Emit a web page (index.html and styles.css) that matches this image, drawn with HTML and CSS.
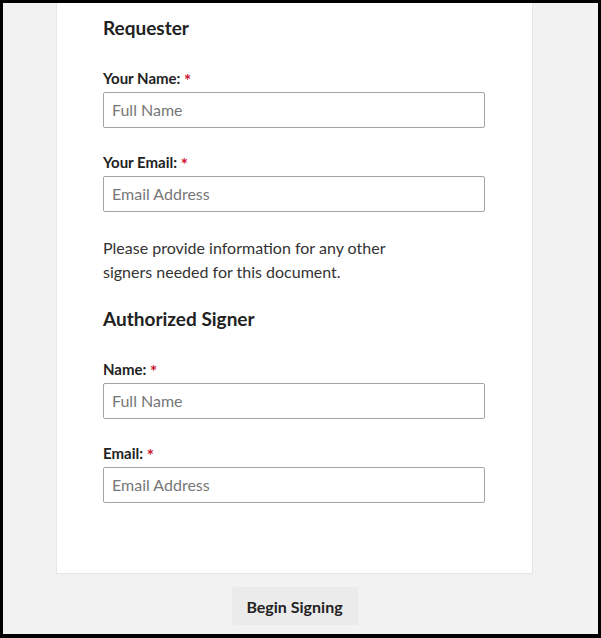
FILE: index.html
```html
<!DOCTYPE html>
<html lang="en">
<head>
<meta charset="utf-8">
<title>Requester</title>
<link rel="stylesheet" href="styles.css">
</head>
<body>
<div class="frame">
  <div class="card">
    <h2 class="heading">Requester</h2>
    <div class="field">
      <label class="label">Your Name: <span class="req">*</span></label>
      <input class="input" type="text" placeholder="Full Name">
    </div>
    <div class="field">
      <label class="label">Your Email: <span class="req">*</span></label>
      <input class="input" type="text" placeholder="Email Address">
    </div>
    <p class="note">Please provide information for any other<br>signers needed for this document.</p>
    <h2 class="heading">Authorized Signer</h2>
    <div class="field">
      <label class="label">Name: <span class="req">*</span></label>
      <input class="input" type="text" placeholder="Full Name">
    </div>
    <div class="field">
      <label class="label">Email: <span class="req">*</span></label>
      <input class="input" type="text" placeholder="Email Address">
    </div>
  </div>
  <div class="actions">
    <button class="btn" type="button">Begin Signing</button>
  </div>
</div>
</body>
</html>
```

FILE: styles.css
```css
* { box-sizing: border-box; }
html, body { margin: 0; padding: 0; }
body {
  font-family: Lato, "Liberation Sans", sans-serif;
  color: #222;
}
.frame {
  width: 601px;
  height: 638px;
  border: 3px solid #000;
  border-bottom-width: 4px;
  background: #f2f2f2;
  overflow: hidden;
}
.card {
  width: 477px;
  margin-left: 53px;
  height: 571px;
  background: #fff;
  border: 1px solid #e6e6e6;
  border-top: none;
  padding: 13px 0 0 46px;
}
.heading {
  margin: 0;
  font-size: 19px;
  line-height: 24px;
  font-weight: 700;
  color: #222;
}
.field {
  display: flex;
  flex-direction: column;
  gap: 4px;
  margin-top: 28px;
}
.field + .field { margin-top: 24px; }
.label {
  font-size: 15px;
  line-height: 20px;
  font-weight: 700;
  color: #222;
}
.req {
  color: #d0112b;
  font-size: 17px;
  line-height: 0;
  vertical-align: -3px;
}
.input {
  width: 382px;
  height: 36px;
  border: 1px solid #a3a3a3;
  border-radius: 2px;
  padding: 0 8px 2px;
  font-family: inherit;
  font-size: 16px;
  color: #222;
  background: #fff;
}
.input::placeholder { color: #777; }
.note {
  margin: 24px 0 23px;
  font-size: 16px;
  line-height: 24px;
  color: #333;
}
.actions {
  display: flex;
  justify-content: center;
  width: 477px;
  margin-left: 53px;
  padding-top: 13px;
}
.btn {
  width: 126px;
  height: 38px;
  border: none;
  border-radius: 2px;
  background: #ebebeb;
  font-family: inherit;
  font-size: 16px;
  font-weight: 700;
  color: #222;
}
```
